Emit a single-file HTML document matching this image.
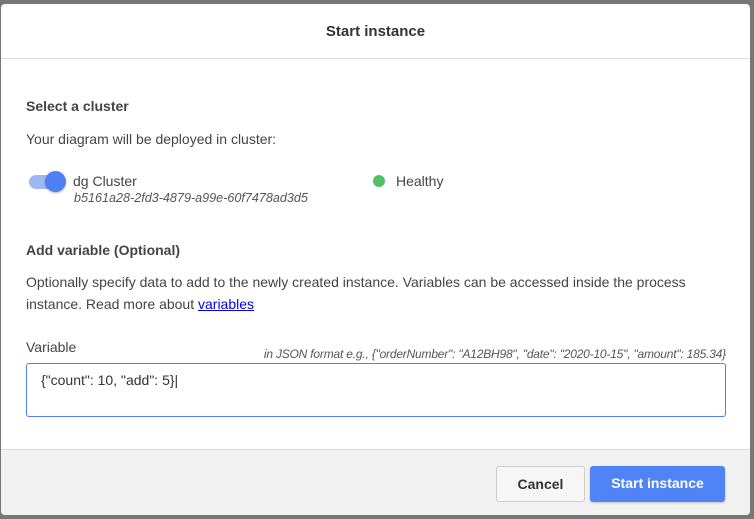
<!DOCTYPE html>
<html><head><style>
*{box-sizing:border-box;margin:0;padding:0}
body{width:754px;height:519px;background:#777;font-family:"Liberation Sans",sans-serif;position:relative;overflow:hidden;color:#333}
.dlg{position:absolute;left:1px;top:4px;width:749px;height:511px;background:#fff;border-radius:4px;overflow:hidden}
.hd{height:55px;border-bottom:1px solid #ddd;text-align:center;font-weight:bold;font-size:15px;line-height:56px;color:#333}
.t{position:absolute;font-size:14px;color:#444}
.b{font-weight:bold;font-size:14px}
.ft{position:absolute;left:0;top:445px;width:749px;height:66px;background:#f1f1f1;border-top:1px solid #ddd}
.btn{position:absolute;top:16px;height:36px;border-radius:3px;font-weight:bold;font-size:14px;text-align:center;line-height:35px}
</style></head><body>
<div class="dlg">
<div class="hd">Start instance</div>
<div class="t b" style="left:25px;top:94px">Select a cluster</div>
<div class="t" style="left:25px;top:127px">Your diagram will be deployed in cluster:</div>
<div style="position:absolute;left:28px;top:171px;width:36px;height:14px;border-radius:7px;background:#9fb8f5"></div>
<div style="position:absolute;left:44px;top:167px;width:21px;height:21px;border-radius:50%;background:#4f80f3;box-shadow:0 1px 2px rgba(0,0,0,.3)"></div>
<div class="t" style="left:72px;top:169px">dg Cluster</div>
<div class="t" style="left:73px;top:187px;font-size:12.6px;font-style:italic;color:#555">b5161a28-2fd3-4879-a99e-60f7478ad3d5</div>
<div style="position:absolute;left:372px;top:171px;width:12px;height:12px;border-radius:50%;background:#52c063"></div>
<div class="t" style="left:395px;top:169px">Healthy</div>
<div class="t b" style="left:25px;top:238px">Add variable (Optional)</div>
<div class="t" style="left:25px;top:267px;line-height:22px;width:700px">Optionally specify data to add to the newly created instance. Variables can be accessed inside the process instance. Read more about <a style="color:#00e;text-decoration:underline">variables</a></div>
<div class="t" style="left:25px;top:335px">Variable</div>
<div class="t" style="right:24px;top:343px;font-size:12px;font-style:italic;color:#555;letter-spacing:-0.2px">in JSON format e.g., {"orderNumber": "A12BH98", "date": "2020-10-15", "amount": 185.34}</div>
<div style="position:absolute;left:25px;top:359px;width:700px;height:54px;border:1px solid #4f80f3;border-radius:3px"></div>
<div class="t" style="left:40px;top:368px;color:#333">{"count": 10, "add": 5}|</div>
<div class="ft">
<div class="btn" style="left:495px;width:89px;background:#f6f6f6;border:1px solid #ccc;color:#333">Cancel</div>
<div class="btn" style="left:589px;width:135px;background:#5083f5;color:#fff;box-shadow:0 1px 2px rgba(0,0,0,.2)">Start instance</div>
</div>
</div>
</body></html>
